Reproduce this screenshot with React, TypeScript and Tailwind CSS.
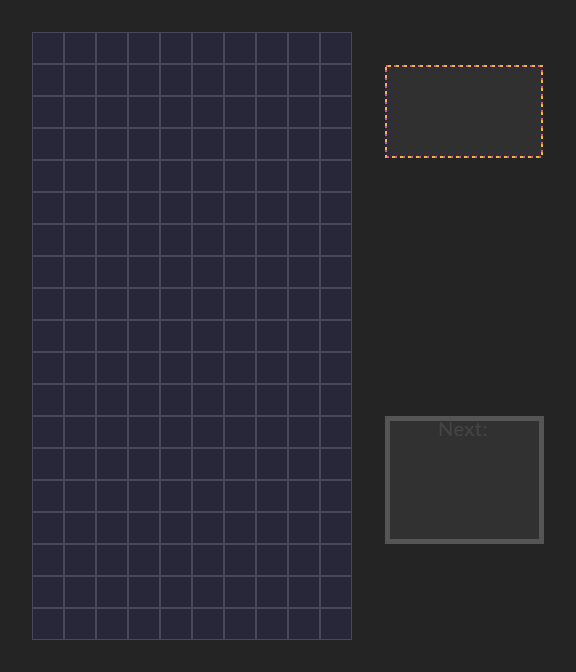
import React from "react";

const COLS = 10;
const ROWS = 19;

function Board() {
  return (
    <div className="grid grid-cols-[repeat(10,32px)] w-[320px]">
      {Array.from({ length: COLS * ROWS }).map((_, i) => (
        <div key={i} className="w-8 h-8 bg-[#282739] border border-[#47465a]" />
      ))}
    </div>
  );
}

function HoldBox() {
  return (
    <div className="relative w-[158px] h-[93px] bg-[#303030]">
      <svg className="absolute inset-0" width="158" height="93" viewBox="0 0 158 93">
        <rect x="1" y="1" width="156" height="91" fill="none" stroke="#2a2940" strokeWidth="2" />
        <rect x="1" y="1" width="156" height="91" fill="none" stroke="#d6569f" strokeWidth="2" strokeDasharray="2 6" />
        <rect x="1" y="1" width="156" height="91" fill="none" stroke="#f2b632" strokeWidth="2" strokeDasharray="3 5" strokeDashoffset="-2" />
      </svg>
    </div>
  );
}

function NextBox() {
  return (
    <div className="w-[159px] h-[128px] border-[5px] border-[#555555] bg-[#313131] flex flex-col items-center">
      <span className="text-[20px] leading-[24px] text-[#454545] font-['Lato',sans-serif] -mt-[5px] -ml-[3px] tracking-wide">Next:</span>
    </div>
  );
}

export default function App() {
  return (
    <div className="w-[576px] h-[672px] bg-[#242424] flex p-8">
      <Board />
      <div className="ml-[33px] pt-[33px] flex flex-col">
        <HoldBox />
        <div className="mt-[258px]">
          <NextBox />
        </div>
      </div>
    </div>
  );
}
